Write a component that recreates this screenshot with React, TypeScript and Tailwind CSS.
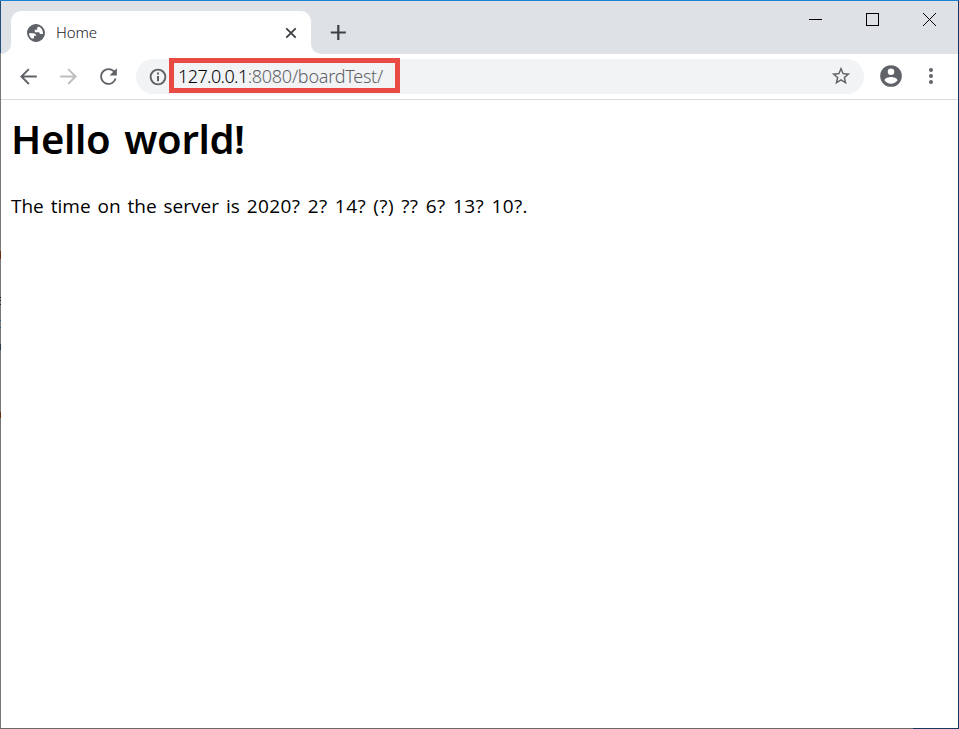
import React from "react";

function Icon({ d, className }: { d: string; className: string }) {
  return (
    <svg viewBox="0 0 24 24" className={className} fill="currentColor">
      <path d={d} />
    </svg>
  );
}

function TabStrip() {
  return (
    <div className="flex h-[53px] bg-[#dee1e6]">
      <div className="flex w-[10px] items-end bg-white">
        <div className="h-full w-full rounded-br-[10px] bg-[#dee1e6]" />
      </div>
      <div className="flex bg-white">
        <div className="flex w-[300px] bg-[#dee1e6]">
          <div className="mt-[10px] flex w-full items-center rounded-t-[10px] bg-white pl-[15px]">
            <svg viewBox="0 0 20 20" className="size-5 text-[#5f6368]">
              <circle cx="10" cy="10" r="8" fill="none" stroke="currentColor" strokeWidth="2" />
              <path
                fill="currentColor"
                d="M10 1.500C5.500 1.500 1.500 5 1.500 10L7 10.200c2 0 3.200 1 3.200 2.600H8v2.400H6.200l1.600 3c5 1.200 10.200-2.200 10.700-7.200h-3c-1.500 0-2-.8-2.400-1.800H8.800V6.800h2.400V5.200c0-1 1-1.600 2-1.900C12.500 2 11.500 1.500 10 1.500z"
              />
            </svg>
            <span className="-mt-[2px] ml-[10px] w-[229px] text-[15px] leading-5 font-light tracking-[-0.1px] text-[#202124]">
              Home
            </span>
            <svg viewBox="0 0 12 12" className="size-3 text-[#3c4043]" stroke="currentColor" strokeWidth="1.800">
              <path d="M1.300 1.300l9.400 9.400M10.700 1.300l-9.400 9.400" />
            </svg>
          </div>
        </div>
      </div>
      <div className="flex w-[647px] bg-white">
        <div className="flex w-full justify-between rounded-bl-[10px] bg-[#dee1e6]">
          <svg viewBox="0 0 16 16" className="ml-[19px] mt-[23px] size-4 text-[#3c4043]" stroke="currentColor" strokeWidth="2.200">
            <path d="M.8 8.500h15M8.300 1v15" />
          </svg>
          <div className="mr-[22px] mt-[12px] flex gap-[44px] text-black">
            <svg viewBox="0 0 13 13" className="size-[13px]" stroke="currentColor">
              <path d="M0 6.500h13" />
            </svg>
            <div className="size-[13px] border border-black" />
            <svg viewBox="0 0 13 13" className="size-[13px]" stroke="currentColor">
              <path d="M0 0l13 13M13 0L0 13" />
            </svg>
          </div>
        </div>
      </div>
    </div>
  );
}

function Toolbar() {
  return (
    <div className="flex h-[46px] items-center border-b border-[#dadce0] bg-white pb-px text-[#5f6368]">
      <Icon className="ml-[15px] size-[25px]" d="M20 11.100H7.500l5.500-5.590L11.700 4.200l-7.800 7.800 7.800 7.800 1.300-1.310L7.500 12.900H20z" />
      <Icon className="ml-[15px] size-[25px] text-[#bcbec0]" d="M4 11.100h12.500L11 5.510l1.300-1.310 7.800 7.800-7.800 7.800-1.300-1.310 5.500-5.590H4z" />
      <Icon
        className="ml-[15px] size-[25px]"
        d="M17.650 6.350A7.958 7.958 0 0 0 12 4a8 8 0 1 0 7.730 10h-1.900A6.200 6.200 0 1 1 12 5.800c1.720 0 3.240.7 4.350 1.850L13 11h7V4l-2.350 2.350z"
      />
      <div className="mt-px ml-[15px] flex h-[35px] w-[728px] items-center rounded-full bg-[#f1f3f4] pl-[12px] pr-[12px]">
        <Icon
          className="size-5"
          d="M10.800 6.700h2.400v2.400h-2.400zm0 4h2.400v6.500h-2.400zM12 2a10 10 0 1 0 0 20 10 10 0 0 0 0-20zm0 17.700a7.700 7.700 0 1 1 0-15.400 7.700 7.700 0 0 1 0 15.400z"
        />
        <div className="ml-px h-[35px] w-[231px] -translate-y-px border-[5px] border-[#ea4a44] pl-[4px] text-[18px] leading-[27px] font-light whitespace-nowrap text-[#5f6368]">
          <span className="tracking-[-0.58px] text-black">127.0.0.1</span>
          <span className="tracking-[-0.25px]">:8080/boardTest/</span>
        </div>
        <Icon
          className="ml-auto -mt-px size-[22px]"
          d="M22 9.240l-7.190-.62L12 2 9.190 8.630 2 9.240l5.460 4.730L5.820 21 12 17.270 18.180 21l-1.630-7.030L22 9.240zM12 15.400l-3.760 2.270 1-4.280-3.320-2.880 4.380-.38L12 6.100l1.710 4.040 4.380.38-3.320 2.880 1 4.280L12 15.400z"
        />
      </div>
      <Icon
        className="ml-[14px] size-[26px]"
        d="M12 2a10 10 0 1 0 0 20 10 10 0 0 0 0-20zm0 3a3 3 0 1 1 0 6 3 3 0 0 1 0-6zm0 14.200a7.200 7.200 0 0 1-6-3.220c.03-1.990 4-3.080 6-3.080s5.970 1.090 6 3.080a7.200 7.200 0 0 1-6 3.220z"
      />
      <Icon
        className="ml-[15px] size-6"
        d="M12 8a2 2 0 1 0 0-4 2 2 0 0 0 0 4zm0 2a2 2 0 1 0 0 4 2 2 0 0 0 0-4zm0 6a2 2 0 1 0 0 4 2 2 0 0 0 0-4z"
      />
    </div>
  );
}

/* Slivers of the desktop behind the window that show through its one-pixel frame. */
function FrameEdges() {
  return (
    <>
      <div className="absolute -left-px top-0 h-[52px] w-px bg-[#1f4e79]" />
      <div className="absolute -left-px top-[250px] h-2 w-px bg-[#6b3010]" />
      <div className="absolute -left-px top-[296px] h-px w-px bg-[#222222]" />
      <div className="absolute -left-px top-[299px] h-px w-px bg-[#222222]" />
      <div className="absolute -left-px top-[303px] h-px w-px bg-[#222222]" />
      <div className="absolute -left-px top-[319px] h-px w-px bg-[#2b5f82]" />
      <div className="absolute -left-px top-[326px] h-px w-px bg-[#2b5f82]" />
      <div className="absolute -left-px top-[343px] h-[6px] w-px bg-[#26384a]" />
      <div className="absolute -left-px top-[411px] h-[6px] w-px bg-[#6b3010]" />
      <div className="absolute -right-px -bottom-px h-px w-[46px] bg-[#17375e]" />
    </>
  );
}

export default function App() {
  return (
    <div className="relative flex h-[729px] w-[959px] flex-col border border-t-[#1883d7] border-r-[#17375e] border-b-[#696969] border-l-[#777777] bg-white font-['Noto_Sans',sans-serif]">
      <TabStrip />
      <Toolbar />
      <main className="pl-[10px] text-black">
        <h1 className="mt-[9px] text-[40px] leading-[60px] font-semibold tracking-[-0.35px] whitespace-nowrap [word-spacing:4px]">
          Hello world!
        </h1>
        <p className="mt-[22px] font-['Open_Sans','Noto_Sans',sans-serif] text-[19px] leading-[30px] whitespace-nowrap [word-spacing:2px]">
          <span>The time on the server is </span>
          <span className="tracking-[0.4px]">2020? 2? 14? (?) ?? 6? 13? 10?.</span>
        </p>
      </main>
      <FrameEdges />
    </div>
  );
}
